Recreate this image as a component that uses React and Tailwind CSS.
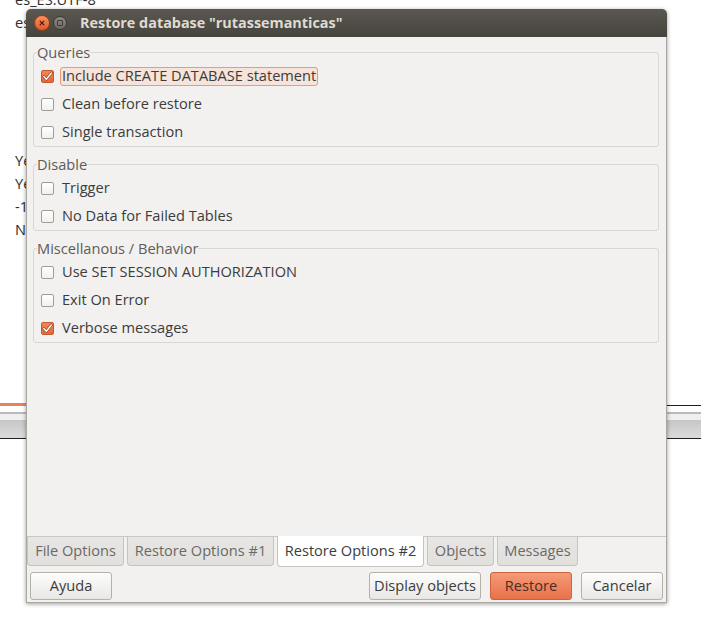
import React from "react";

const font = { fontFamily: '"Open Sans", "Noto Sans", sans-serif' };

function Check({ checked }) {
  if (!checked) {
    return <span className="w-[13px] h-[13px] shrink-0 rounded-[2px] border border-[#a09d97] bg-gradient-to-b from-[#ffffff] to-[#f1f0ee]" />;
  }
  return (
    <span className="w-[13px] h-[13px] shrink-0 rounded-[2px] border border-[#c65a2f] bg-gradient-to-b from-[#f3855a] to-[#e1673a] flex items-center justify-center">
      <svg width="11" height="11" viewBox="0 0 11 11">
        <path d="M1.8 5.6 L4.3 8.2 L9.4 2" fill="none" stroke="#7a3418" strokeWidth="2.6" strokeLinecap="round" strokeLinejoin="round" />
        <path d="M1.8 5.6 L4.3 8.2 L9.4 2" fill="none" stroke="#ffffff" strokeWidth="1.5" strokeLinecap="round" strokeLinejoin="round" />
      </svg>
    </span>
  );
}

function Row({ label, checked, focused }) {
  return (
    <div className="h-[28px] flex items-center pl-[7px]">
      <Check checked={checked} />
      <span
        className={`ml-[6px] h-[19px] flex items-center px-[1px] rounded-[3px] border ${focused ? "border-[#ec9977] bg-[#f6e3da]" : "border-transparent"}`}
      >
        {label}
      </span>
    </div>
  );
}

function Group({ title, rows }) {
  return (
    <fieldset className="border border-[#d9d7d2] rounded-[3px]">
      <legend className="ml-[3px] h-[20px] leading-[20px] text-[#5e5c58]">{title}</legend>
      {rows.map((r) => (
        <Row key={r.label} {...r} />
      ))}
    </fieldset>
  );
}

const tabs = [
  ["File Options", "w-[97px]"],
  ["Restore Options #1", "w-[147px]"],
  ["Restore Options #2", "w-[147px]"],
  ["Objects", "w-[67px]"],
  ["Messages", "w-[81px]"],
];

function Btn({ children, primary, className = "" }) {
  return (
    <button
      className={`h-[28px] w-[82px] rounded-[3px] border text-[#3c3c3c] ${primary ? "border-[#c8653f] bg-gradient-to-b from-[#f49a76] to-[#e8714a] text-[#4d2c20]" : "border-[#b4b1ab] bg-gradient-to-b from-[#fdfdfc] to-[#e8e7e4]"} ${className}`}
    >
      {children}
    </button>
  );
}

export default function App() {
  const bg = ["es_ES.UTF-8", "es_ES.UTF-8", "", "", "", "", "", "Yes", "Yes", "-1", "No"];
  return (
    <div className="relative w-[701px] h-[626px] bg-white overflow-hidden text-[14.6px]" style={font}>
      {/* window behind */}
      <div className="-mt-[12px] pl-[15px] leading-[23px] text-[#2e2e2e]">
        {bg.map((t, i) => (
          <div key={i} className="h-[23px]">{t}</div>
        ))}
      </div>
      <div className="mt-[162px]">
        <div className="flex h-[3px]">
          <div className="w-[26px] bg-[#e9825a]" />
          <div className="flex-1 flex flex-col justify-end"><div className="h-[1px] bg-[#1e1e1e]" /></div>
        </div>
        <div className="h-[6px]" />
        <div className="h-[2px] bg-[#b9b9b9]" />
        <div className="h-[6px] bg-[#efefef]" />
        <div className="h-[18px] bg-gradient-to-b from-[#c6c6c6] to-[#dcdcdc]" />
        <div className="h-[1px] bg-[#1e1e1e]" />
      </div>

      {/* dialog */}
      <div className="absolute left-[26px] top-[9px] w-[641px] rounded-t-[5px] shadow-[0_1px_4px_rgba(0,0,0,0.4)]">
        <div className="h-[28px] rounded-t-[5px] bg-gradient-to-b from-[#5b5850] to-[#46443e] flex items-center">
          <span className="ml-[8px] w-[16px] h-[16px] rounded-full border border-[#9e3d18] bg-gradient-to-b from-[#f7905f] to-[#e0592a] flex items-center justify-center">
            <svg width="6" height="6" viewBox="0 0 6 6">
              <path d="M0.8 0.8 L5.2 5.2 M5.2 0.8 L0.8 5.2" stroke="#4a1a08" strokeWidth="1.2" />
            </svg>
          </span>
          <span className="ml-[3px] w-[14px] h-[14px] rounded-full border border-[#3b3934] bg-gradient-to-b from-[#8d8a82] to-[#6d6a63] flex items-center justify-center">
            <span className="w-[6px] h-[6px] border border-[#3e3c37] rounded-[1px]" />
          </span>
          <span className="ml-[13px] font-bold text-[#dfdbd2] text-[14.4px]">Restore database "rutassemanticas"</span>
        </div>
        <div className="bg-[#f2f1f0] border-x border-b border-[#a9a7a2] flex flex-col">
          <div className="h-[500px] border-b border-[#c9c7c2] pt-[5px] pl-[6px] pr-[7px] flex flex-col gap-[7px] text-[#3c3c3c]">
            <Group
              title="Queries"
              rows={[
                { label: "Include CREATE DATABASE statement", checked: true, focused: true },
                { label: "Clean before restore" },
                { label: "Single transaction" },
              ]}
            />
            <Group title="Disable" rows={[{ label: "Trigger" }, { label: "No Data for Failed Tables" }]} />
            <Group
              title="Miscellanous / Behavior"
              rows={[
                { label: "Use SET SESSION AUTHORIZATION" },
                { label: "Exit On Error" },
                { label: "Verbose messages", checked: true },
              ]}
            />
          </div>
          <div className="h-[30px] flex items-start gap-[3px]">
            {tabs.map(([t, w], i) =>
              i === 2 ? (
                <div key={t} className={`${w} -mt-[1px] h-[31px] bg-white border-x border-b border-[#c6c4bf] rounded-b-[4px] flex items-center justify-center text-[#3c3c3c]`}>
                  {t}
                </div>
              ) : (
                <div key={t} className={`${w} h-[29px] bg-gradient-to-b from-[#e7e6e4] to-[#e1e0dd] border-x border-b border-[#c6c4bf] rounded-b-[4px] flex items-center justify-center text-[#6b6965]`}>
                  {t}
                </div>
              )
            )}
          </div>
          <div className="mt-[5px] mb-[2px] px-[3px] flex items-center">
            <Btn>Ayuda</Btn>
            <div className="ml-auto flex gap-[9px]">
              <Btn className="w-[112px]">Display objects</Btn>
              <Btn primary>Restore</Btn>
              <Btn>Cancelar</Btn>
            </div>
          </div>
        </div>
      </div>
    </div>
  );
}
